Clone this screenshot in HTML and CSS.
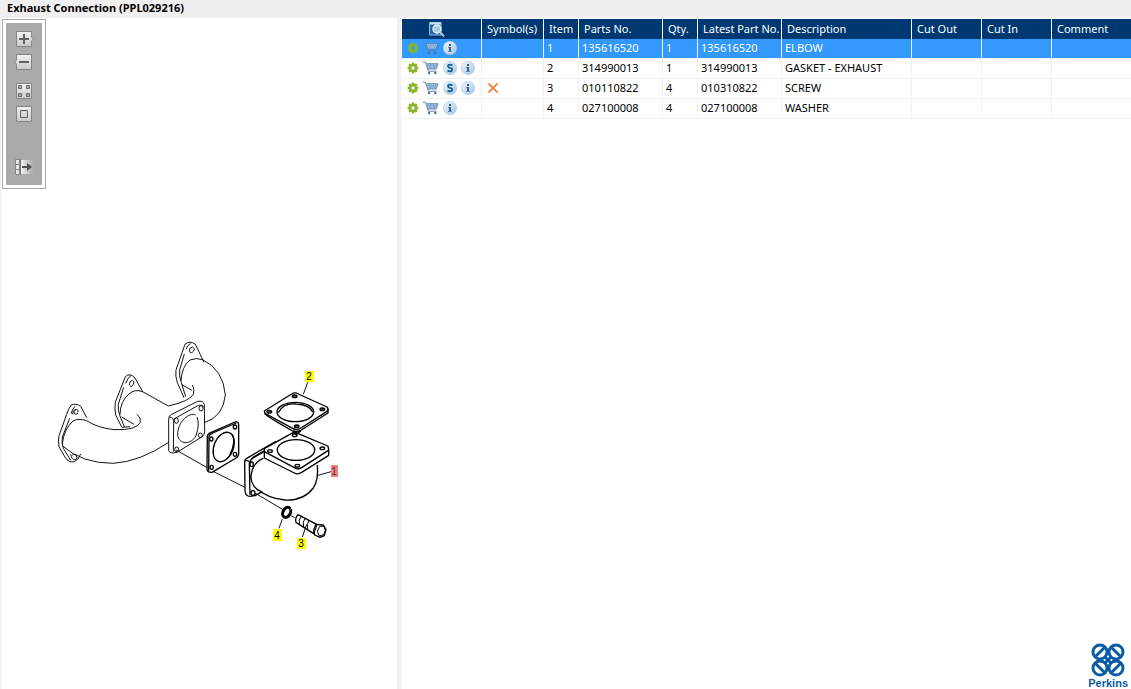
FILE: index.html
```html
<!DOCTYPE html>
<html lang="en">
<head>
<meta charset="utf-8">
<title>Exhaust Connection (PPL029216)</title>
<link rel="stylesheet" href="styles.css">
</head>
<body>
<svg class="defs" aria-hidden="true">
  <defs>
    <linearGradient id="key" x1="0" y1="0" x2="0" y2="1"><stop offset="0" stop-color="#f2f2f2"/><stop offset="1" stop-color="#c9c9c9"/></linearGradient>
    <linearGradient id="fade" x1="0" y1="0" x2="1" y2="0"><stop offset="0" stop-color="#f2f2f2"/><stop offset="1" stop-color="#ababab"/></linearGradient>
    <linearGradient id="disc" x1="0" y1="0" x2="1" y2="1"><stop offset="0" stop-color="#f2f8fc"/><stop offset="1" stop-color="#a6c6e0"/></linearGradient>
    <symbol id="gear" viewBox="0 0 12 12">
      <g stroke="#8aba2c" stroke-width="2.6"><path d="M6 .6V11.4M.6 6H11.4M2.2 2.2L9.8 9.8M9.8 2.2L2.2 9.8"/></g>
      <circle cx="6" cy="6" r="3.9" fill="#84b52a"/><circle class="hub" cx="6" cy="6" r="1.7"/>
    </symbol>
    <symbol id="cart" viewBox="0 0 17 14">
      <path d="M4 2.5H15.5L13.5 8H5.5Z" fill="#c4d7e9"/>
      <path d="M0 .8H2.6L5.7 10.4H14.5M3.4 2.5H16L14 8H5" fill="none" stroke="#5681b0"/>
      <path d="M6 2.5L7 8M8.5 2.5V8M11 2.5V8M13.5 2.5L12.4 8M4 4.3H15M4.6 6.1H14.5" fill="none" stroke="#6f96be" stroke-width=".7"/>
      <circle cx="6.5" cy="12.4" r="1.3" fill="#48729f"/><circle cx="13" cy="12.4" r="1.3" fill="#48729f"/>
    </symbol>
    <symbol id="info" viewBox="0 0 14 14">
      <circle cx="7" cy="7" r="6.7" fill="url(#disc)" stroke="#a9c6df" stroke-width=".6"/>
      <path d="M6 3H8V5H6ZM6 6H8V11H6Z" fill="#2b5f9e"/><path d="M5 6H6V7H5ZM5 10H9V11H5Z" fill="#5f8aba"/>
    </symbol>
    <symbol id="super" viewBox="0 0 14 14">
      <circle cx="7" cy="7" r="6.7" fill="url(#disc)" stroke="#a9c6df" stroke-width=".6"/>
      <path d="M9.5 4.4Q8.2 3.6 6.8 3.7Q5 3.8 5 5.3Q5 6.5 7 6.9Q9.3 7.3 9.2 8.9Q9 10.4 7 10.4Q5.6 10.4 4.4 9.6" fill="none" stroke="#0b6299" stroke-width="1.8"/>
    </symbol>
  </defs>
</svg>
<header class="titlebar"><h1>Exhaust Connection (PPL029216)</h1></header>
<main class="workspace">
  <section class="drawing">
    <svg class="sheet" viewBox="1 18 396 671" role="img" aria-label="Exhaust connection exploded view">
      <g class="ink" transform="translate(50 335) scale(.33333)">
        <path d="M110 248L92 214Q78 203 63 211Q55 222 50 238L27 302Q24 318 27 335L46 368Q57 384 73 380Q85 376 92 357"/>
        <path d="M75 214Q68 220 63 236M59 250L37 306Q34 324 40 340L62 376"/>
        <path d="M37 326Q42 282 69 258Q84 249 110 257Q145 280 195 284Q260 286 271 262Q274 248 261 238"/>
        <path d="M38 333Q95 385 190 385Q270 380 356 322"/>
        <path d="M68 238Q68 224 79 223Q88 226 83 232M78 223Q70 227 72 235Q77 241 84 235M62 358Q65 375 76 375Q85 370 78 359Q68 355 66 362"/>
        <path d="M279 172L255 129Q240 112 226 125L196 202Q193 222 197 240L215 276"/>
        <path d="M243 122Q233 128 227 145M221 157L205 208Q203 228 211 246L224 277"/>
        <path d="M210 238Q211 198 237 177Q254 161 278 170L355 213M215 246L252 268M215 277L240 275"/>
        <path d="M238 151Q237 138 247 136Q256 140 250 148Q245 158 240 153"/>
        <path d="M462 82L436 28Q420 15 405 28L378 105Q375 122 382 143L402 188"/>
        <path d="M422 25Q412 30 408 43M403 57L389 105Q387 123 393 140L407 185"/>
        <path d="M393 138Q395 95 420 75Q438 67 458 74Q520 104 526 180Q520 245 463 263M355 213Q420 198 430 178Q434 164 428 150M395 149L426 166"/>
        <path d="M418 50Q417 37 427 36Q438 40 431 48Q426 57 419 51"/>
        <path fill="#fff" d="M356 252Q355 243 365 238L443 199Q461 196 463 210L464 290Q464 300 455 306L381 352Q358 358 356 345Z"/>
        <path d="M358 246Q373 246 371 266L370 350M372 252L445 211Q458 209 461 215"/>
        <path d="M437 240C420 230 382 259 383 300C386 329 423 331 438 302M441 246Q450 268 438 302"/>
        <ellipse cx="379" cy="257" rx="6" ry="8"/><ellipse cx="453" cy="220" rx="6" ry="8"/><ellipse cx="451" cy="301" rx="6" ry="7"/><ellipse cx="380" cy="343" rx="6" ry="7"/>
        <path d="M378 345L470 397"/>
      </g>
      <g class="ink" transform="translate(195 365) scale(.33333)">
        <path d="M48 316L150 367M180 384L264 434M286 451L299 458"/>
        <g class="bold">
          <path fill="#fff" d="M37 215Q37 207 47 203L120 171Q131 168 131 180L131 263Q132 274 123 279L51 322Q36 323 36 312Z"/>
          <path d="M41 317L42 214Q44 207 53 204L124 174"/>
          <ellipse cx="86" cy="246" rx="29" ry="46" transform="rotate(21 86 246)"/>
          <path d="M112 208Q124 230 104 270" />
          <ellipse cx="49" cy="222" rx="5" ry="6"/><ellipse cx="120" cy="186" rx="5" ry="6"/><ellipse cx="120" cy="268" rx="5" ry="6"/><ellipse cx="50" cy="307" rx="5" ry="6"/>
          <path d="M243 229L155 280Q148 285 149 295L150 378Q152 394 165 394L180 392L202 380M208 259L175 278Q163 286 163 300L165 389M205 280Q171 294 168 335Q167 350 178 365L191 377"/>
          <path d="M149 287Q156 284 164 291M173 278L240 239M170 281L225 247"/>
          <path d="M367 300Q371 345 355 369Q325 408 270 405Q220 400 190 374"/>
          <ellipse cx="170" cy="298" rx="5" ry="7"/><ellipse cx="174" cy="384" rx="6" ry="7"/>
          <path fill="#fff" d="M208 251L290 205Q299 200 308 205L398 243Q402 248 401 271L320 322Q309 330 298 324L208 279Z"/>
          <path d="M208 260L298 308Q309 315 320 308L400 256"/>
          <ellipse cx="303" cy="255" rx="56" ry="31"/>
          <path fill="#fff" d="M208 138L290 87Q300 80 310 87L396 126Q402 132 396 139L318 189Q305 198 293 190L210 145Z"/>
          <path d="M209 145Q210 151 293 198Q305 202 319 195L399 144V132M294 199L302 208L318 198"/>
          <ellipse cx="301" cy="141" rx="55" ry="29"/>
          <path d="M250 143Q264 113 304 117Q343 119 353 141"/>
          <g fill="#555"><ellipse cx="299" cy="94" rx="7" ry="4"/><ellipse cx="223" cy="140" rx="7" ry="4"/><ellipse cx="382" cy="133" rx="7" ry="4"/><ellipse cx="305" cy="184" rx="7" ry="4"/></g>
          <ellipse cx="299" cy="211" rx="7" ry="4"/><ellipse cx="225" cy="258" rx="7" ry="4"/><ellipse cx="382" cy="250" rx="7" ry="4"/><ellipse cx="307" cy="302" rx="7" ry="4"/>
          <ellipse class="washer" cx="275" cy="442" rx="11" ry="16" transform="rotate(25 275 442)"/>
          <path class="nick" d="M284 434L293 428M272 446L277 440"/>
          <path fill="#fff" d="M309 449L365 478L356 506L303 472Q299 459 309 449Z"/>
          <path class="thread" d="M319 454Q309 464 314 479M331 460Q321 470 326 486M343 466Q333 477 338 493"/>
          <path fill="#fff" d="M363 478L385 480L393 494L388 512L375 517L359 510L356 496Z"/>
          <path class="thread" d="M366 480L357 504M374 484L387 484L391 496L386 509L373 513L367 499Z"/>
        </g>
        <path d="M338 52L325 88M366 332L408 320M262 462L252 490M335 478L322 516"/>
      </g>
      <g class="callouts">
        <rect x="305" y="371" width="9" height="11"/><text x="309" y="380">2</text>
        <rect class="picked" x="331" y="465" width="7" height="12"/><text class="picked-text" x="334" y="475">1</text>
        <rect x="273" y="529" width="9" height="12"/><text x="277" y="539">4</text>
        <rect x="297" y="538" width="9" height="11"/><text x="301" y="547">3</text>
      </g>
    </svg>
    <div class="toolbar" role="toolbar" aria-label="Drawing tools">
      <button type="button" aria-label="Zoom in"><svg viewBox="0 0 20 16"><path d="M2.500 .5H17.500V6L19.500 8L17.500 10V15.500H2.500Z" fill="url(#key)" stroke="#858585"/><path d="M10 3V13M5 8H15" stroke="#606060" stroke-width="2"/></svg></button>
      <button type="button" aria-label="Zoom out"><svg viewBox="0 0 20 16"><path d="M2.500 .5H17.500V15.500H2.500V10L.5 8L2.500 6Z" fill="url(#key)" stroke="#858585"/><path d="M5 8H15" stroke="#606060" stroke-width="2"/></svg></button>
      <button type="button" class="apart" aria-label="Fit to window"><svg viewBox="0 0 20 16"><path d="M2.500 .5H17.500V15.500H2.500Z" fill="url(#key)" stroke="#858585"/><path d="M4.500 2.500h3v3h-3zM12.500 2.500h3v3h-3zM4.500 10.500h3v3h-3zM12.500 10.500h3v3h-3z" fill="#aaa" stroke="#666"/></svg></button>
      <button type="button" aria-label="Actual size"><svg viewBox="0 0 20 16"><path d="M2.500 .5H17.500V15.500H2.500Z" fill="url(#key)" stroke="#858585"/><path d="M6.500 4.500h7v7h-7z" fill="#d8d8d8" stroke="#666"/></svg></button>
      <button type="button" class="last" aria-label="Toggle list"><svg viewBox="0 0 20 16"><path d="M7 1H19V15H7Z" fill="url(#fade)"/><path d="M1.500 .5H5.500V15.500H1.500ZM1.500 5.500H5.500M1.500 10.500H5.500" fill="#e6e6e6" stroke="#858585"/><path d="M6.500 0V16" stroke="#777"/><path d="M8 8H14" stroke="#505050" stroke-width="2"/><path d="M13 4L18 8L13 12Z" fill="#505050"/></svg></button>
    </div>
  </section>
  <section class="parts">
    <table>
      <colgroup><col class="c-act"><col class="c-sym"><col class="c-item"><col class="c-part"><col class="c-qty"><col class="c-part"><col class="c-desc"><col class="c-cut"><col class="c-cut"><col></colgroup>
      <thead>
        <tr>
          <th class="find" scope="col"><button type="button" aria-label="Search parts"><svg class="lens" viewBox="0 0 16 16"><path d="M.5 1.500H12V14H.5Z" fill="#23679e" stroke="#8fc0e4"/><path d="M1 2.500H12" stroke="#c9e3f5" stroke-width="2"/><circle cx="8" cy="8" r="4" fill="#a9cbe3" stroke="#e9f2f8" stroke-width="1.400"/><path d="M11 11L15 15.500" stroke="#a7c6df" stroke-width="2"/></svg></button></th>
          <th scope="col">Symbol(s)</th><th scope="col">Item</th><th scope="col">Parts No.</th><th scope="col">Qty.</th><th scope="col">Latest Part No.</th><th scope="col">Description</th><th scope="col">Cut Out</th><th scope="col">Cut In</th><th scope="col">Comment</th>
        </tr>
      </thead>
      <tbody>
        <tr class="selected">
          <td><div class="actions"><button type="button" aria-label="Options"><svg class="gear"><use href="#gear"/></svg></button><button type="button" aria-label="Add to cart"><svg class="cart"><use href="#cart"/></svg></button><button type="button" aria-label="Information"><svg class="disc"><use href="#info"/></svg></button></div></td>
          <td></td><td>1</td><td>135616520</td><td>1</td><td>135616520</td><td>ELBOW</td><td></td><td></td><td></td>
        </tr>
        <tr>
          <td><div class="actions"><button type="button" aria-label="Options"><svg class="gear"><use href="#gear"/></svg></button><button type="button" aria-label="Add to cart"><svg class="cart"><use href="#cart"/></svg></button><button type="button" aria-label="Supersession"><svg class="disc"><use href="#super"/></svg></button><button type="button" aria-label="Information"><svg class="disc"><use href="#info"/></svg></button></div></td>
          <td></td><td>2</td><td>314990013</td><td>1</td><td>314990013</td><td>GASKET - EXHAUST</td><td></td><td></td><td></td>
        </tr>
        <tr>
          <td><div class="actions"><button type="button" aria-label="Options"><svg class="gear"><use href="#gear"/></svg></button><button type="button" aria-label="Add to cart"><svg class="cart"><use href="#cart"/></svg></button><button type="button" aria-label="Supersession"><svg class="disc"><use href="#super"/></svg></button><button type="button" aria-label="Information"><svg class="disc"><use href="#info"/></svg></button></div></td>
          <td class="symbol"><svg class="cross" viewBox="0 0 10 10" role="img" aria-label="Not serviced"><path d="M.5 .5L9.500 9.500M9.500 .5L.5 9.500" stroke="#f3722c" stroke-width="1.600"/></svg></td><td>3</td><td>010110822</td><td>4</td><td>010310822</td><td>SCREW</td><td></td><td></td><td></td>
        </tr>
        <tr>
          <td><div class="actions"><button type="button" aria-label="Options"><svg class="gear"><use href="#gear"/></svg></button><button type="button" aria-label="Add to cart"><svg class="cart"><use href="#cart"/></svg></button><button type="button" aria-label="Information"><svg class="disc"><use href="#info"/></svg></button></div></td>
          <td></td><td>4</td><td>027100008</td><td>4</td><td>027100008</td><td>WASHER</td><td></td><td></td><td></td>
        </tr>
      </tbody>
    </table>
    <div class="brand">
      <svg class="rings" viewBox="0 0 34 34" aria-hidden="true"><g fill="none" stroke="#0b5ba5" stroke-width="3"><circle cx="9" cy="9" r="7"/><circle cx="25" cy="9" r="7"/><circle cx="9" cy="25" r="7"/><circle cx="25" cy="25" r="7"/><path d="M4.200 13.800L13.800 4.200M20.200 4.200L29.800 13.800M4.200 20.200L13.800 29.800M20.200 29.800L29.800 20.200M13.800 13.800L20.200 20.200M20.200 13.800L13.800 20.200"/></g></svg>
      <span>Perkins</span>
    </div>
  </section>
</main>
</body>
</html>
```

FILE: styles.css
```css
* { box-sizing: border-box; }
html, body { height: 100%; margin: 0; }
body {
  display: flex;
  flex-direction: column;
  background: #f0f0f0;
  color: #000;
  font: 11px/16px "Noto Sans", "Open Sans", sans-serif;
}
button { display: block; padding: 0; border: 0; background: none; cursor: pointer; }
svg { display: block; }
.defs { position: absolute; width: 0; height: 0; }

.titlebar { padding: 0 7px 2px; }
.titlebar h1 { margin: 0; font-size: 11px; line-height: 16px; font-weight: 700; }

.workspace {
  flex: 1;
  min-height: 0;
  display: grid;
  grid-template-columns: 396fr 730fr;
  gap: 4px;
  padding-left: 1px;
}
.drawing { position: relative; min-height: 0; background: #fff; }
.sheet { width: 100%; height: 100%; }
.ink { fill: none; stroke: #111; stroke-width: 3; stroke-linejoin: round; }
.bold { stroke: #000; stroke-width: 4; }
.washer { stroke-width: 9; }
.nick { stroke: #fff; stroke-width: 2; }
.thread { stroke-width: 3; }
.callouts { font: 10px "Liberation Sans", sans-serif; text-anchor: middle; }
.callouts rect { fill: #ff0; }
.callouts .picked { fill: #f08080; }
.callouts .picked-text { fill: #602020; }

.toolbar {
  position: absolute;
  top: 1px;
  left: 1px;
  display: flex;
  flex-direction: column;
  align-items: center;
  gap: 7px;
  width: 44px;
  padding: 11px 0 13px;
  border: 1px solid #aaa;
  background: #aaa;
  box-shadow: inset 0 0 0 3px #fff;
}
.toolbar svg { width: 20px; height: 16px; }
.toolbar .apart { margin-top: 6px; }
.toolbar .last { margin-top: 30px; }

.parts {
  display: flex;
  flex-direction: column;
  justify-content: space-between;
  padding: 1px 0 0 1px;
  background: #fff;
}
table { width: 100%; table-layout: fixed; border-collapse: separate; border-spacing: 0; }
.c-act { width: 80px; }
.c-sym { width: 62px; }
.c-item, .c-qty { width: 35px; }
.c-part { width: 84px; }
.c-desc { width: 130px; }
.c-cut { width: 70px; }
th, td { height: 20px; padding: 0 3px; text-align: left; white-space: nowrap; border-right: 1px solid #f0f0f0; }
th { padding: 0 0 0 5px; background: #003872; color: #fff; font-weight: 400; border-right-color: #fff; }
td { padding-bottom: 1px; border-bottom: 1px solid #f0f0f0; }
th:last-child, td:last-child { border-right: 0; }
.selected td { background: #39f; color: #fff; }
.find { padding-left: 27px; }
.lens { width: 16px; height: 16px; }
.actions { display: flex; align-items: center; gap: 4px; padding-left: 2px; }
.gear { width: 12px; height: 12px; fill: #fff; }
.selected .gear { fill: #39f; }
.cart { width: 16px; height: 14px; }
.disc { width: 14px; height: 14px; }
.symbol { padding-left: 6px; }
.cross { width: 10px; height: 10px; }

.brand { align-self: flex-end; padding-right: 3px; color: #0b5ba5; font: bold 11px/12px "Liberation Sans", sans-serif; }
.rings { width: 34px; height: 34px; margin: 0 auto; }
```
